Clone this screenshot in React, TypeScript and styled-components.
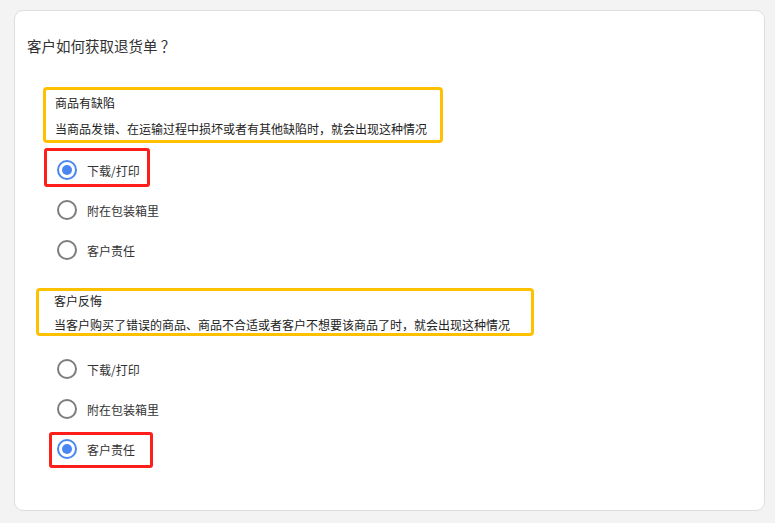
import { FC } from "react";
import styled, { createGlobalStyle } from "styled-components";

const GlobalStyle = createGlobalStyle`
  html, body {
    margin: 0;
    padding: 0;
    background: #f3f3f3;
    font-family: "Noto Sans CJK SC", "Noto Sans", sans-serif;
    color: #333;
  }
`;

const Page = styled.div`
  padding: 10px 10px 12px 14px;
`;

const Card = styled.div`
  box-sizing: border-box;
  height: 501px;
  background: #fff;
  border: 1px solid #dedede;
  border-radius: 9px;
  padding: 25px 0 0 12px;
`;

const Title = styled.div`
  font-size: 14.5px;
  line-height: 20px;
  color: #333;
  margin-bottom: 31px;
`;

const Reason = styled.div<{ $left: number; $pad: string }>`
  display: inline-flex;
  flex-direction: column;
  margin-left: ${(p) => p.$left}px;
  padding: ${(p) => p.$pad};
  border: 3px solid #ffc000;
  border-radius: 4px;
  font-size: 12px;
  line-height: 16px;
  color: #222;
`;

const ReasonTitle = styled.span<{ $gap: number }>`
  margin-bottom: ${(p) => p.$gap}px;
`;

const Options = styled.div<{ $top: number; $bottom: number }>`
  display: flex;
  flex-direction: column;
  margin-top: ${(p) => p.$top}px;
  margin-bottom: ${(p) => p.$bottom}px;
`;

const Row = styled.div`
  position: relative;
  display: flex;
  align-items: center;
  gap: 10px;
  height: 40px;
  padding-left: 30px;
  font-size: 12px;
  color: #333;
`;

const Radio = styled.span<{ $on?: boolean }>`
  box-sizing: border-box;
  width: 20px;
  height: 20px;
  border-radius: 50%;
  border: 2px solid ${(p) => (p.$on ? "#4a86f2" : "#7d7d7d")};
  display: flex;
  align-items: center;
  justify-content: center;

  &::after {
    content: "";
    display: ${(p) => (p.$on ? "block" : "none")};
    width: 10px;
    height: 10px;
    border-radius: 50%;
    background: #4a86f2;
  }
`;

const Mark = styled.span<{ $x: number; $y: number; $w: number; $h: number }>`
  position: absolute;
  left: ${(p) => p.$x}px;
  top: ${(p) => p.$y}px;
  width: ${(p) => p.$w}px;
  height: ${(p) => p.$h}px;
  box-sizing: border-box;
  border: 3px solid #ff1f1a;
  border-radius: 3px;
  pointer-events: none;
`;

interface IMark {
  x: number;
  y: number;
  w: number;
  h: number;
}

interface IOption {
  label: string;
  checked?: boolean;
  mark?: IMark;
}

const Option: FC<IOption> = ({ label, checked, mark }) => (
  <Row>
    <Radio $on={checked} />
    <span>{label}</span>
    {mark && <Mark $x={mark.x} $y={mark.y} $w={mark.w} $h={mark.h} />}
  </Row>
);

const App: FC = () => (
  <>
    <GlobalStyle />
    <Page>
      <Card>
        <Title>客户如何获取退货单 ？</Title>

        <Reason $left={16} $pad="5px 13px 3px 9px">
          <ReasonTitle $gap={10}>商品有缺陷</ReasonTitle>
          <span>当商品发错、在运输过程中损坏或者有其他缺陷时，就会出现这种情况</span>
        </Reason>
        <Options $top={7} $bottom={17}>
          <Option
            label="下载/打印"
            checked
            mark={{ x: 17, y: -2, w: 106, h: 39 }}
          />
          <Option label="附在包装箱里" />
          <Option label="客户责任" />
        </Options>

        <Reason $left={9} $pad="2px 21px 0 15px">
          <ReasonTitle $gap={8}>客户反悔</ReasonTitle>
          <span>当客户购买了错误的商品、商品不合适或者客户不想要该商品了时，就会出现这种情况</span>
        </Reason>
        <Options $top={13} $bottom={0}>
          <Option label="下载/打印" />
          <Option label="附在包装箱里" />
          <Option
            label="客户责任"
            checked
            mark={{ x: 22, y: 3, w: 104, h: 36 }}
          />
        </Options>
      </Card>
    </Page>
  </>
);

export default App;
